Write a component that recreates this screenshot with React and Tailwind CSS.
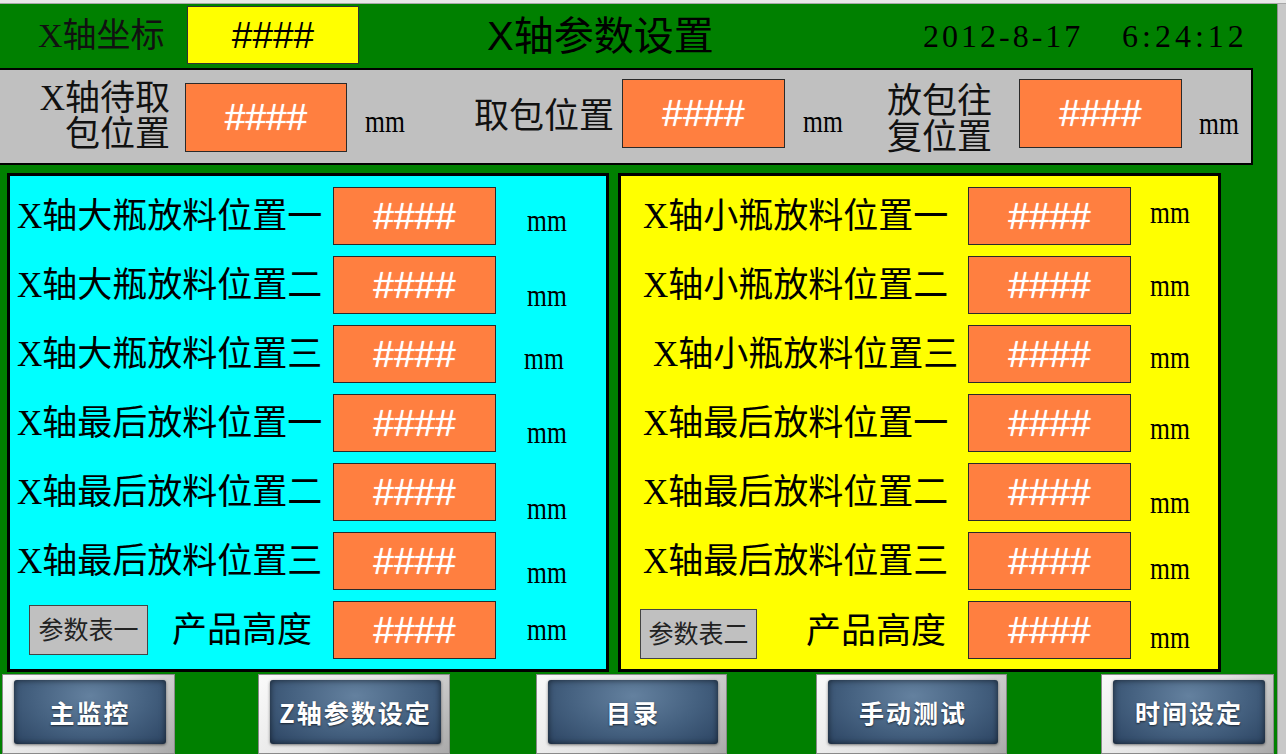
const serif = "font-['Liberation_Serif','Noto_Sans_CJK_SC',serif]";
const sans = "font-['Liberation_Sans','Noto_Sans_CJK_SC',sans-serif]";

const leftRows = [
  { label: 'X轴大瓶放料位置一', mm: 'translate-y-[4px]' },
  { label: 'X轴大瓶放料位置二', mm: 'translate-y-[10px]' },
  { label: 'X轴大瓶放料位置三', mm: 'translate-y-[4px] -translate-x-[3px]' },
  { label: 'X轴最后放料位置一', mm: 'translate-y-[9px]' },
  { label: 'X轴最后放料位置二', mm: 'translate-y-[16px]' },
  { label: 'X轴最后放料位置三', mm: 'translate-y-[11px]' },
];

const rightRows = [
  { label: 'X轴小瓶放料位置一', mm: '-translate-y-[4px]', pad: 'pl-[22px]' },
  { label: 'X轴小瓶放料位置二', mm: 'translate-y-[0px]', pad: 'pl-[22px]' },
  { label: 'X轴小瓶放料位置三', mm: 'translate-y-[3px]', pad: 'pl-[32px]' },
  { label: 'X轴最后放料位置一', mm: 'translate-y-[5px]', pad: 'pl-[22px]' },
  { label: 'X轴最后放料位置二', mm: 'translate-y-[10px]', pad: 'pl-[22px]' },
  { label: 'X轴最后放料位置三', mm: 'translate-y-[7px]', pad: 'pl-[22px]' },
];

const buttons = [
  { text: '主监控', cls: 'ml-[2px] w-[173px]' },
  { text: 'Z轴参数设定', cls: 'ml-[83px] w-[192px]' },
  { text: '目录', cls: 'ml-[86px] w-[191px]' },
  { text: '手动测试', cls: 'ml-[89px] w-[191px]' },
  { text: '时间设定', cls: 'ml-[94px] w-[173px]' },
];

const Hash = ({ className = 'w-[163px] h-[58px]' }) => (
  <div
    className={`${className} shrink-0 bg-[#ff7f40] border border-[#2a2a2a] flex items-center justify-center text-white text-[37px] leading-none [text-shadow:0_0_1px_#fff] ${sans}`}
  >
    ####
  </div>
);

const Mm = ({ className = '' }) => (
  <span className={`inline-block ${className}`}>
    <span className={`inline-block scale-x-80 origin-left text-[32px] leading-none text-black ${serif}`}>mm</span>
  </span>
);

const TableButton = ({ text, className }) => (
  <div
    className={`${className} shrink-0 bg-[#c0c0c0] border border-[#444] flex items-center justify-center text-[25px] leading-none text-[#222] ${serif}`}
  >
    {text}
  </div>
);

const NavButton = ({ text, cls }) => (
  <div
    className={`${cls} h-[80px] shrink-0 pl-[11px] pr-[8px] pt-[5px] pb-[9px] border border-[#8a8a8a] bg-[linear-gradient(135deg,#fafafa_0%,#e2e2e2_50%,#a9a9a9_100%)]`}
  >
    <div className="w-full h-full rounded-[3px] flex items-center justify-center bg-[radial-gradient(ellipse_at_50%_25%,#64819f_0%,#44607f_55%,#2c4462_100%)] shadow-[inset_0_0_6px_rgba(0,0,0,0.6),0_1px_3px_rgba(0,0,0,0.5)]">
      <span className="text-white text-[25px] font-bold tracking-[2px] leading-none font-['Noto_Sans_CJK_SC',sans-serif] [text-shadow:0_1px_2px_rgba(0,0,0,0.6)]">
        {text}
      </span>
    </div>
  </div>
);

export default function App() {
  return (
    <div className="w-[1286px] h-[754px] overflow-hidden flex flex-col bg-[#c8c8c8]">
      <div className="h-[4px] shrink-0 bg-[#e8e8e8] border-b border-[#a8a8a8]" />
      <div className="flex flex-1">
        <div className="w-[1277px] h-[750px] bg-[#008000] flex flex-col">
          {/* header */}
          <div className="h-[64px] shrink-0 flex items-center">
            <div className={`pl-[38px] w-[187px] text-[34px] leading-none text-[#111] ${serif}`}>X轴坐标</div>
            <div className={`w-[172px] h-[58px] mt-[-2px] bg-[#ffff00] border border-[#333] flex items-center justify-center text-[37px] leading-none text-black ${sans}`}>
              ####
            </div>
            <div className={`ml-[128px] w-[436px] text-[40px] leading-none text-black ${sans}`}>X轴参数设置</div>
            <div className={`w-[199px] text-[32px] tracking-[3px] leading-none text-black ${serif}`}>2012-8-17</div>
            <div className={`text-[32px] tracking-[4px] leading-none text-black ${serif}`}>6:24:12</div>
          </div>

          {/* gray bar */}
          <div className="w-[1253px] h-[97px] shrink-0 bg-[#c0c0c0] border-y-2 border-r-2 border-black flex items-start">
            <div className={`w-[170px] mt-[11px] text-right text-[35px] leading-[36px] text-[#111] ${serif}`}>
              X轴待取
              <br />
              包位置
            </div>
            <Hash className="ml-[15px] mt-[13px] w-[162px] h-[69px]" />
            <div className="ml-[18px] w-[109px] mt-[35px]">
              <Mm />
            </div>
            <div className={`w-[148px] mt-[29px] text-[35px] leading-[35px] text-[#111] ${serif}`}>取包位置</div>
            <Hash className="mt-[9px] w-[163px] h-[69px]" />
            <div className="ml-[18px] w-[84px] mt-[35px]">
              <Mm />
            </div>
            <div className={`w-[132px] mt-[14px] text-[35px] leading-[36px] text-[#111] ${serif}`}>
              放包往
              <br />
              复位置
            </div>
            <Hash className="mt-[9px] w-[163px] h-[69px]" />
            <div className="ml-[17px] mt-[37px]">
              <Mm />
            </div>
          </div>

          {/* panels */}
          <div className="h-[499px] mt-[8px] shrink-0 flex">
            <div className="ml-[7px] w-[602px] h-full bg-[#00ffff] border-[3px] border-black pt-[11px] flex flex-col gap-[11px]">
              {leftRows.map((r) => (
                <div key={r.label} className="h-[58px] flex items-center pl-[7px]">
                  <div className={`w-[316px] text-[35px] leading-none whitespace-nowrap text-black ${serif}`}>{r.label}</div>
                  <Hash />
                  <Mm className={`ml-[31px] ${r.mm}`} />
                </div>
              ))}
              <div className="h-[58px] flex items-center pl-[19px]">
                <TableButton text="参数表一" className="w-[119px] h-[50px]" />
                <div className={`ml-[24px] w-[161px] text-[35px] leading-none text-black ${serif}`}>产品高度</div>
                <Hash />
                <Mm className="ml-[31px] -translate-y-[1px]" />
              </div>
            </div>

            <div className="ml-[9px] w-[603px] h-full bg-[#ffff00] border-[3px] border-black pt-[11px] flex flex-col gap-[11px]">
              {rightRows.map((r) => (
                <div key={r.label} className={`h-[58px] flex items-center ${r.pad}`}>
                  <div className={`flex-1 text-[35px] leading-none whitespace-nowrap text-black ${serif}`}>{r.label}</div>
                  <Hash />
                  <Mm className={`ml-[19px] w-[68px] ${r.mm}`} />
                </div>
              ))}
              <div className="h-[58px] flex items-start pl-[19px]">
                <TableButton text="参数表二" className="mt-[8px] w-[117px] h-[50px]" />
                <div className={`ml-[49px] mt-[13px] w-[162px] text-[35px] leading-none text-black ${serif}`}>产品高度</div>
                <Hash />
                <Mm className="ml-[19px] mt-[20px]" />
              </div>
            </div>
          </div>

          {/* nav buttons */}
          <div className="mt-[2px] h-[80px] shrink-0 flex">
            {buttons.map((b) => (
              <NavButton key={b.text} {...b} />
            ))}
          </div>
        </div>
        <div className="flex-1 border-l border-[#909090] bg-[#c8c8c8]" />
      </div>
    </div>
  );
}
